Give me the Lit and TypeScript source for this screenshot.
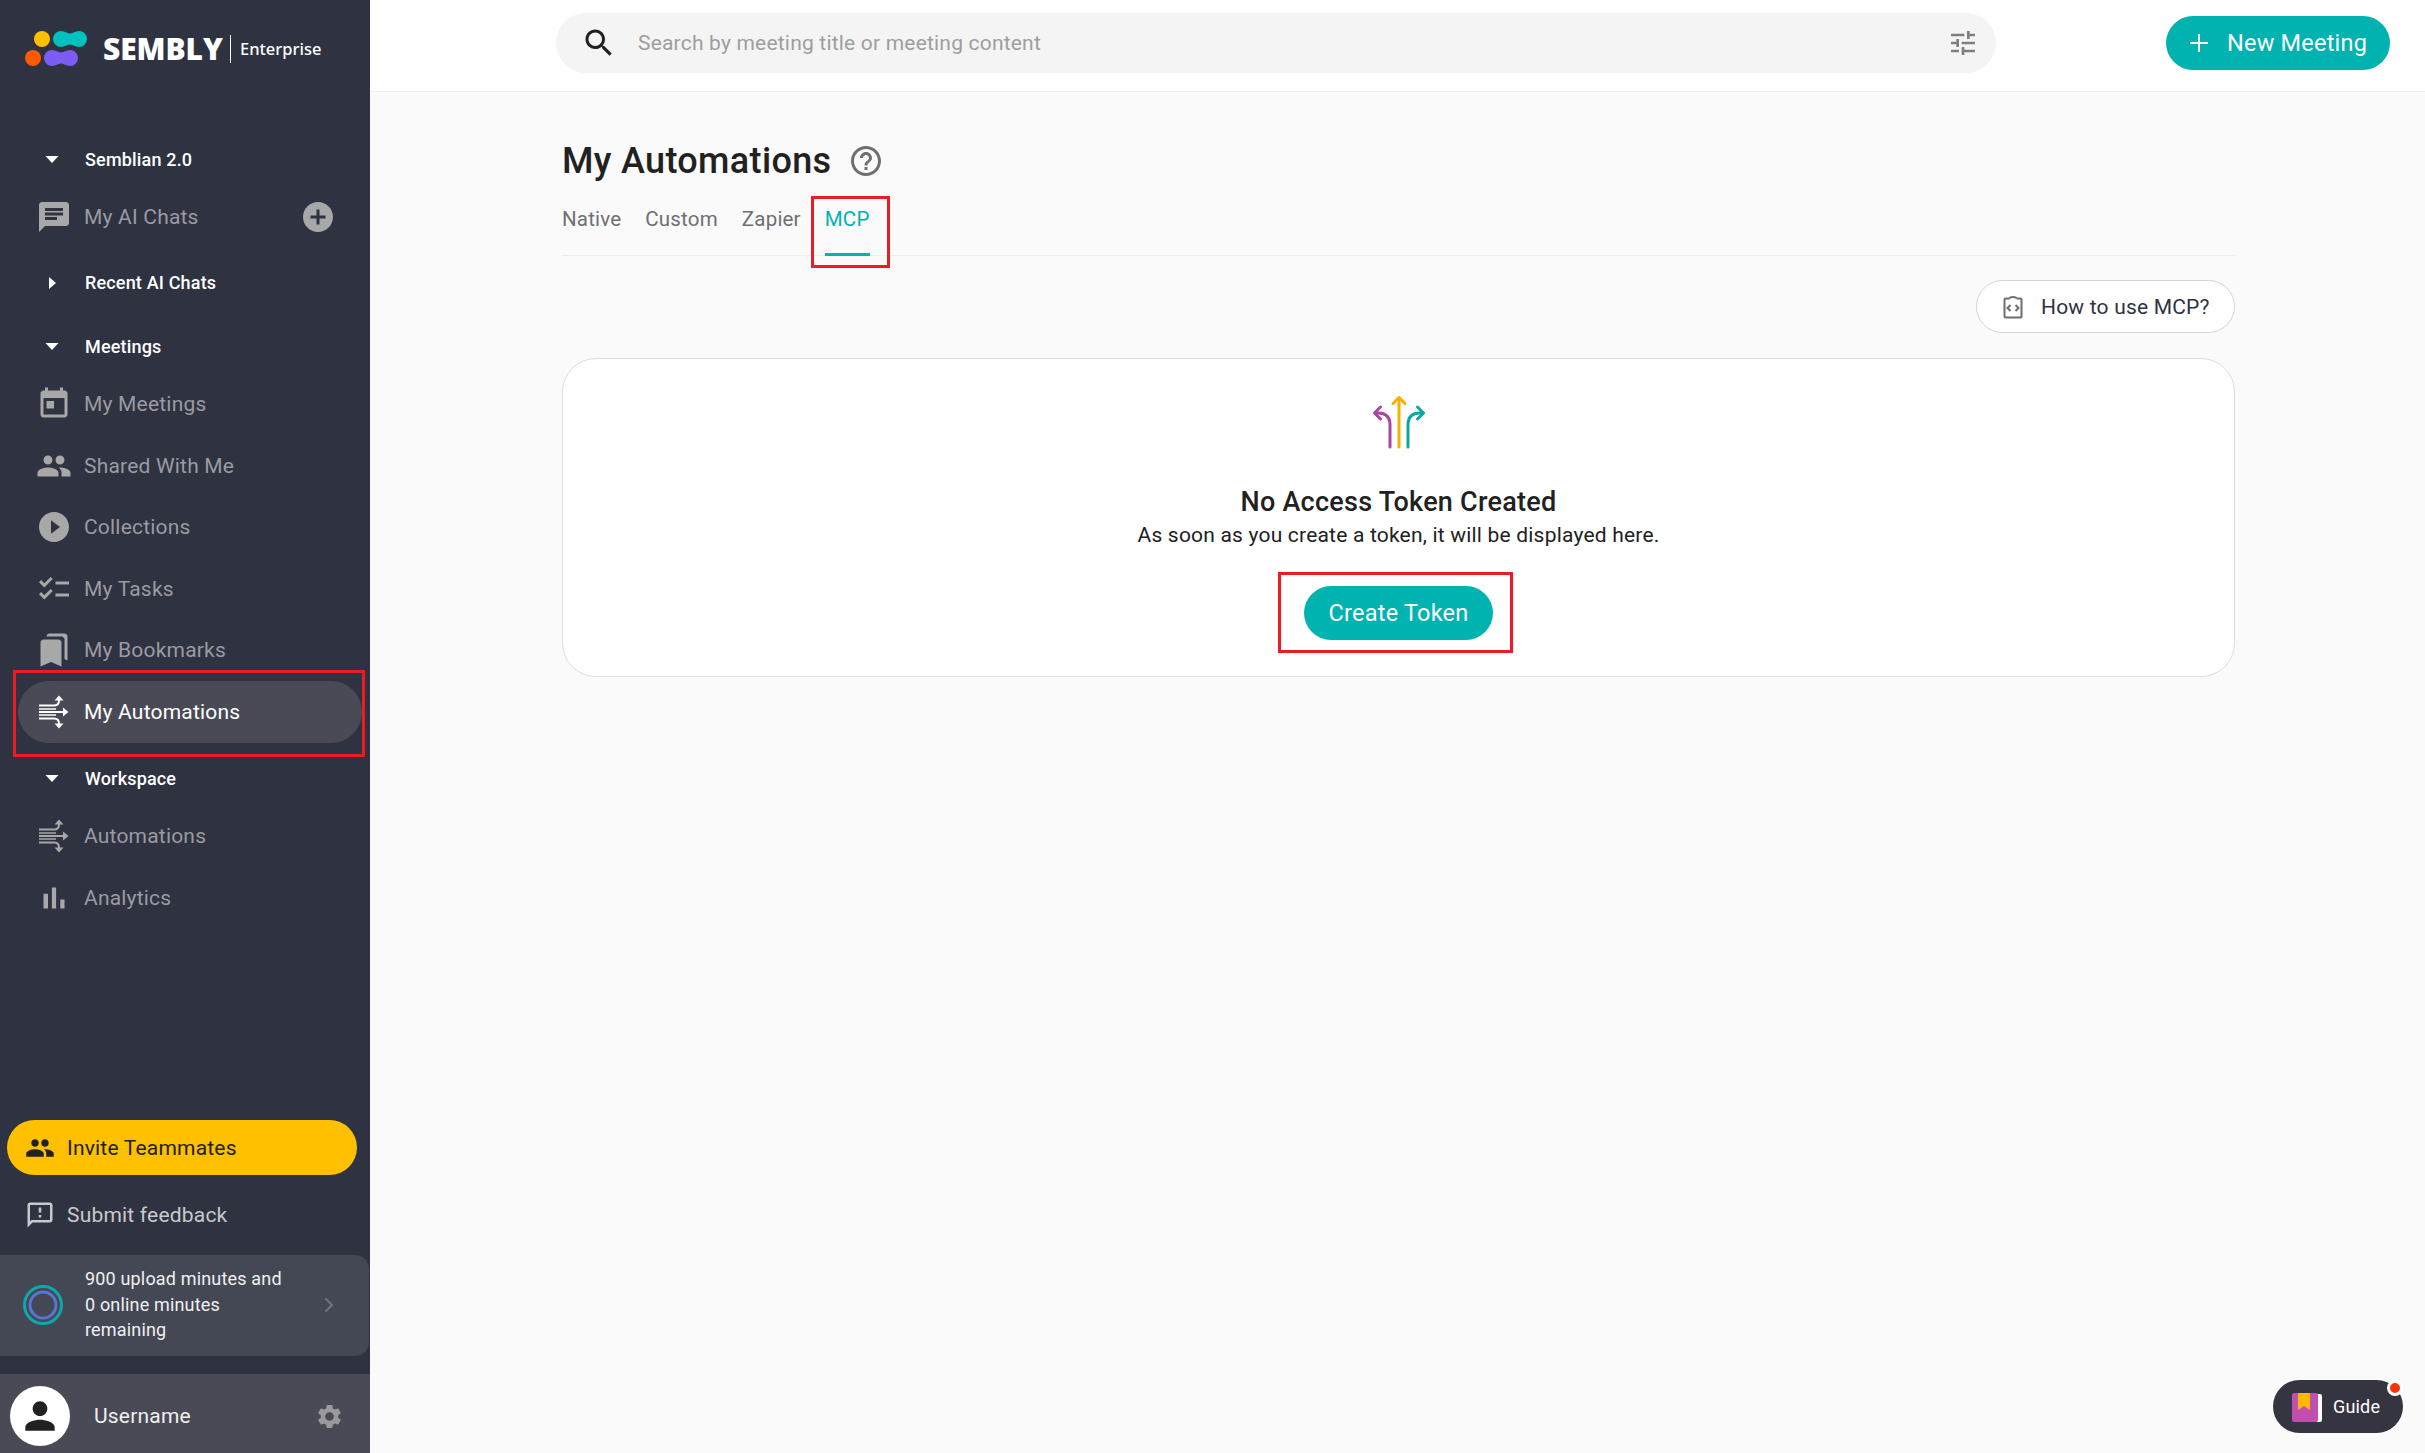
import { LitElement, html, css, svg } from "lit";
import { customElement } from "lit/decorators.js";

const P = {
  chat: "M20 2H4c-1.1 0-1.99.9-1.99 2L2 22l4-4h14c1.1 0 2-.9 2-2V4c0-1.1-.9-2-2-2zM6 9h12v2H6V9zm8 5H6v-2h8v2zm4-6H6V6h12v2z",
  add: "M12 2C6.48 2 2 6.48 2 12s4.48 10 10 10 10-4.48 10-10S17.52 2 12 2zm5 11h-4v4h-2v-4H7v-2h4V7h2v4h4v2z",
  today: "M19 3h-1V1h-2v2H8V1H6v2H5c-1.11 0-1.99.9-1.99 2L3 19c0 1.1.89 2 2 2h14c1.1 0 2-.9 2-2V5c0-1.1-.9-2-2-2zm0 16H5V8h14v11zM7 10h5v5H7z",
  people: "M16 11c1.66 0 2.99-1.34 2.99-3S17.66 5 16 5c-1.66 0-3 1.34-3 3s1.34 3 3 3zm-8 0c1.66 0 2.99-1.34 2.99-3S9.66 5 8 5C6.34 5 5 6.34 5 8s1.34 3 3 3zm0 2c-2.33 0-7 1.17-7 3.5V19h14v-2.5c0-2.33-4.67-3.5-7-3.5zm8 0c-.29 0-.62.02-.97.05 1.16.84 1.97 1.97 1.97 3.45V19h6v-2.5c0-2.33-4.67-3.5-7-3.5z",
  play: "M12 2C6.48 2 2 6.48 2 12s4.48 10 10 10 10-4.48 10-10S17.52 2 12 2zm-2 14.5v-9l6 4.5-6 4.5z",
  tasks: "M22 7h-9v2h9V7zm0 8h-9v2h9v-2zM5.54 11 2 7.46l1.41-1.41 2.12 2.12 4.24-4.24 1.41 1.41L5.54 11zm0 8L2 15.46l1.41-1.41 2.12 2.12 4.24-4.24 1.41 1.41L5.54 19z",
  bookmarks: "M19 18l2 1V3c0-1.1-.9-2-2-2H8.99C7.89 1 7 1.9 7 3h10c1.1 0 2 .9 2 2v13zM15 5H5c-1.1 0-2 .9-2 2v16l7-3 7 3V7c0-1.1-.9-2-2-2z",
  bars: "M5 9.2h3V19H5zM10.6 5h2.8v14h-2.8zm5.6 8H19v6h-2.8z",
  feedback: "M20 2H4c-1.1 0-1.99.9-1.99 2L2 22l4-4h14c1.1 0 2-.9 2-2V4c0-1.1-.9-2-2-2zm0 14H5.17L4 17.17V4h16v12zm-9-4h2v2h-2zm0-6h2v4h-2z",
  person: "M12 12c2.21 0 4-1.79 4-4s-1.79-4-4-4-4 1.79-4 4 1.79 4 4 4zm0 2c-2.67 0-8 1.34-8 4v2h16v-2c0-2.66-5.33-4-8-4z",
  gear: "M19.14 12.94c.04-.3.06-.61.06-.94 0-.32-.02-.64-.07-.94l2.03-1.58c.18-.14.23-.41.12-.61l-1.92-3.32c-.12-.22-.37-.29-.59-.22l-2.39.96c-.5-.38-1.03-.7-1.62-.94l-.36-2.54c-.04-.24-.24-.41-.48-.41h-3.84c-.24 0-.43.17-.47.41l-.36 2.54c-.59.24-1.13.57-1.62.94l-2.39-.96c-.22-.08-.47 0-.59.22L2.74 8.87c-.12.21-.08.47.12.61l2.03 1.58c-.05.3-.09.63-.09.94s.02.64.07.94l-2.03 1.58c-.18.14-.23.41-.12.61l1.92 3.32c.12.22.37.29.59.22l2.39-.96c.5.38 1.03.7 1.62.94l.36 2.54c.05.24.24.41.48.41h3.84c.24 0 .44-.17.47-.41l.36-2.54c.59-.24 1.13-.56 1.62-.94l2.39.96c.22.08.47 0 .59-.22l1.92-3.32c.12-.22.07-.47-.12-.61l-2.01-1.58zM12 15.6c-1.98 0-3.6-1.62-3.6-3.6s1.62-3.6 3.6-3.6 3.6 1.62 3.6 3.6-1.62 3.6-3.6 3.6z",
  search: "M15.5 14h-.79l-.28-.27C15.41 12.59 16 11.11 16 9.5 16 5.91 13.09 3 9.5 3S3 5.91 3 9.5 5.91 16 9.5 16c1.61 0 3.09-.59 4.23-1.57l.27.28v.79l5 4.99L20.49 19l-4.99-5zm-6 0C7.01 14 5 11.99 5 9.5S7.01 5 9.5 5 14 7.01 14 9.5 11.99 14 9.5 14z",
  tune: "M3 17v2h6v-2H3zM3 5v2h10V5H3zm10 16v-2h8v-2h-8v-2h-2v6h2zM7 9v2H3v2h4v2h2V9H7zm14 4v-2H11v2h10zm-6-4h2V7h4V5h-4V3h-2v6z",
  help: "M11 18h2v-2h-2v2zm1-16C6.48 2 2 6.48 2 12s4.48 10 10 10 10-4.48 10-10S17.52 2 12 2zm0 18c-4.41 0-8-3.59-8-8s3.59-8 8-8 8 3.59 8 8-3.59 8-8 8zm0-14c-2.21 0-4 1.79-4 4h2c0-1.1.9-2 2-2s2 .9 2 2c0 2-3 1.75-3 5h2c0-2.25 3-2.5 3-5 0-2.21-1.79-4-4-4z",
};

const icon = (d: string, size = 36) =>
  html`<svg class="ic" width=${size} height=${size} viewBox="0 0 24 24" fill="currentColor"><path d=${d}></path></svg>`;

const autoIcon = html`<svg class="ic" width="36" height="36" viewBox="0 0 36 36" fill="none" stroke="currentColor" stroke-width="2">
  <path d="M3 11.500h15c3 0 5-1.500 5-5V5"></path><path d="M18.500 6.500 23 1.500l4.500 5z" fill="currentColor" stroke="none"></path>
  <path d="M3 18h26"></path><path d="M27 13.500 32.500 18 27 22.500z" fill="currentColor" stroke="none"></path>
  <path d="M3 24.500h15c3 0 5 1.500 5 5V31"></path><path d="M18.500 29.500 23 34.500l4.500-5z" fill="currentColor" stroke="none"></path>
  <path d="M3 15h17M3 21h17" stroke-width="1.500"></path></svg>`;

const caretDown = html`<svg class="caret" width="14" height="7" viewBox="0 0 14 7"><path d="M.5 0h13L7 7z" fill="#fff"></path></svg>`;
const caretRight = html`<svg class="caret" width="14" height="14" viewBox="0 0 14 14"><path d="M4 1l7 6-7 6z" fill="#fff"></path></svg>`;

const logo = svg`<g>
  <circle cx="17" cy="14" r="8" fill="#ffc000"></circle>
  <path d="M36 6c4 0 6 2.500 9 2.500S50 6 54 6a8 8 0 0 1 0 16c-4 0-6-2.500-9-2.500S40 22 36 22a8 8 0 0 1 0-16z" fill="#00c1bd"></path>
  <circle cx="8" cy="33" r="8" fill="#ff5a00"></circle>
  <path d="M27 25c4 0 6 2.500 9 2.500S41 25 45 25a8 8 0 0 1 0 16c-4 0-6-2.500-9-2.500S31 41 27 41a8 8 0 0 1 0-16z" fill="#7b5cf5"></path></g>`;

@customElement("app-root")
export class AppRoot extends LitElement {
  static styles = css`
    :host { display: block; width: 2425px; height: 1453px; font-family: Roboto, "Liberation Sans", sans-serif; color: #212121; position: relative; overflow: hidden; background: #fafafa; }
    * { box-sizing: border-box; letter-spacing: 0.00938em; }
    .ic { flex: none; display: block; }
    .shell { display: flex; height: 100%; }
    .side { width: 370px; flex: none; background: #2f3241; display: flex; flex-direction: column; }
    .brand { height: 132px; flex: none; display: flex; align-items: flex-start; padding: 25px 0 0 25px; color: #fff; }
    .brand svg { flex: none; }
    .wm { font-family: "Open Sans", sans-serif; font-weight: 800; font-size: 30px; line-height: 47px; margin-left: 14px; letter-spacing: -0.1px; width: 118px; white-space: nowrap; }
    .bar { width: 1px; height: 28px; background: #fff; margin: 10px 9px 0 9px; flex: none; }
    .ent { font-family: "Noto Sans", sans-serif; font-weight: 500; font-size: 16.500px; line-height: 48px; letter-spacing: 0; }
    .gh { height: 54px; display: flex; align-items: center; padding-left: 45px; color: #fff; font-weight: 500; font-size: 18px; flex: none; }
    .gh .caret { margin-right: 26px; flex: none; }
    .gh.m8 { margin-top: 8px; }
    .gh.m10 { margin-top: 10px; }
    .gh.m9 { margin-top: 9px; }
    .item { height: 61.500px; display: flex; align-items: center; margin: 0 8px 0 18px; padding-left: 18px; color: #9a9ba1; font-size: 21px; flex: none; position: relative; border-radius: 31px; gap: 12px; }
    .item .ic { color: #a8a8a8; }
    .item .add { margin-left: auto; margin-right: 26px; }
    .item.active { background: #494a55; color: #fff; }
    .item.active .ic { color: #fff; }
    .mark { position: absolute; border: 3px solid #ed1c24; pointer-events: none; }
    .mark.nav { left: -5px; right: -3px; top: -11px; bottom: -14px; }
    .spacer { flex: 1; }
    .invite { height: 55px; margin: 0 13px 10px 7px; border-radius: 28px; background: #ffc000; display: flex; align-items: center; padding-left: 18px; gap: 12px; font-size: 21px; color: #212121; flex: none; }
    .fb { height: 60px; margin-bottom: 10px; display: flex; align-items: center; padding-left: 25px; gap: 12px; color: #c9c9cc; font-size: 21px; flex: none; }
    .mins { height: 101px; margin-right: 1px; border-radius: 0 14px 14px 0; background: #444855; display: flex; align-items: center; padding: 0 0 2px 20px; color: #f0f0f0; font-size: 18px; line-height: 25.500px; flex: none; }
    .mins .ring { flex: none; margin-right: 19px; }
    .mins .txt { flex: 1; }
    .mins .chev { flex: none; margin-right: 35px; }
    .foot { margin-top: 18px; height: 79px; background: #494a55; display: flex; align-items: center; padding: 5px 0 0 10px; color: #f0f0f0; font-size: 21px; flex: none; }
    .avatar { width: 60px; height: 60px; border-radius: 50%; background: #fff; display: flex; align-items: center; justify-content: center; color: #212121; flex: none; margin-right: 24px; }
    .foot .gear { margin-left: auto; margin-right: 26px; color: #99999e; }
    .main { flex: 1; min-width: 0; display: flex; flex-direction: column; }
    .top { height: 92px; flex: none; background: #fff; border-bottom: 1px solid #eeeeee; display: flex; align-items: flex-start; }
    .search { width: 1440px; height: 60px; margin: 13px 0 0 186px; border-radius: 30px; background: #f4f4f4; display: flex; align-items: center; padding-left: 25px; color: #9e9e9e; font-size: 21px; }
    .search .si { color: #212121; margin-right: 21px; }
    .search .tune { margin-left: auto; margin-right: 17px; color: #7f7f7f; }
    .new { margin: 16px 35px 0 auto; height: 54px; width: 224px; border-radius: 27px; background: #00b3b0; color: #fff; display: flex; align-items: center; padding-left: 23px; font-size: 23.500px; gap: 18px; }
    .content { flex: 1; padding: 45px 190px 0 192px; position: relative; }
    .title { display: flex; align-items: center; height: 48px; font-size: 36px; font-weight: 500; color: #212121; }
    .title .ic { margin-left: 17px; color: #6f6f6f; }
    .tabs { display: flex; gap: 24px; height: 71px; border-bottom: 1px solid #eeeeee; font-size: 20.500px; color: #6f6f73; }
    .tab { position: relative; padding-top: 21px; line-height: 26px; height: 71px; }
    .tab.on { color: #00b3b0; border-bottom: 3px solid #00b3b0; }
    .mark.tabm { left: -14px; right: -20px; top: 11px; bottom: -15px; }
    .howrow { display: flex; justify-content: flex-end; margin-top: 24px; }
    .how { height: 53px; width: 259px; border-radius: 27px; background: #fff; border: 1px solid #d4d4d4; display: flex; align-items: center; padding-left: 24px; gap: 16px; font-size: 21px; color: #2f3241; }
    .card { margin-top: 25px; height: 319px; background: #fff; border: 1px solid #dddddd; border-radius: 34px; display: flex; flex-direction: column; align-items: center; padding-top: 36px; }
    .card h2 { margin: 36px 0 0; font-size: 27px; font-weight: 500; line-height: 34px; color: #212121; }
    .card p { margin: 0; font-size: 21px; line-height: 32px; color: #212121; }
    .btn { position: relative; margin-top: 35px; height: 54px; width: 189px; border-radius: 27px; background: #00b3b0; color: #fff; display: flex; align-items: center; justify-content: center; font-size: 23.500px; }
    .mark.btnm { left: -26px; right: -20px; top: -14px; bottom: -13px; }
    .guide { position: absolute; left: 2273px; top: 1380px; width: 130px; height: 53px; border-radius: 27px; background: #343541; color: #fff; display: flex; align-items: center; padding-left: 19px; gap: 11px; font-size: 18px; }
    .dot { position: absolute; right: 0; top: 0; width: 16px; height: 16px; border-radius: 50%; background: #ff3300; border: 3px solid #fff; }
  `;

  private nav(label: string, i: unknown, cls = "") {
    return html`<div class="item ${cls}">${i}<span>${label}</span></div>`;
  }

  render() {
    return html`<div class="shell">
      <aside class="side">
        <div class="brand">
          <svg width="64" height="42" viewBox="0 0 64 42">${logo}</svg>
          <span class="wm">SEMBLY</span><span class="bar"></span><span class="ent">Enterprise</span>
        </div>
        <div class="gh">${caretDown}<span>Semblian 2.0</span></div>
        <div class="item">${icon(P.chat)}<span>My AI Chats</span><span class="add">${icon(P.add)}</span></div>
        <div class="gh m8">${caretRight}<span>Recent AI Chats</span></div>
        <div class="gh m10">${caretDown}<span>Meetings</span></div>
        ${this.nav("My Meetings", icon(P.today))}
        ${this.nav("Shared With Me", icon(P.people))}
        ${this.nav("Collections", icon(P.play))}
        ${this.nav("My Tasks", icon(P.tasks))}
        ${this.nav("My Bookmarks", icon(P.bookmarks))}
        <div class="item active">${autoIcon}<span>My Automations</span><div class="mark nav"></div></div>
        <div class="gh m9">${caretDown}<span>Workspace</span></div>
        ${this.nav("Automations", autoIcon)}
        ${this.nav("Analytics", icon(P.bars))}
        <div class="spacer"></div>
        <div class="invite">${icon(P.people, 30)}<span>Invite Teammates</span></div>
        <div class="fb">${icon(P.feedback, 30)}<span>Submit feedback</span></div>
        <div class="mins">
          <svg class="ring" width="46" height="46" viewBox="0 0 46 46" fill="none"><circle cx="23" cy="23" r="18.500" stroke="#0fa8a8" stroke-width="3"></circle><circle cx="23" cy="23" r="13" stroke="#5b73d6" stroke-width="3"></circle></svg>
          <div class="txt">900 upload minutes and<br />0 online minutes<br />remaining</div>
          <svg class="chev" width="10" height="16" viewBox="0 0 10 16" fill="none"><path d="M1.500 1.500 8 8l-6.500 6.500" stroke="#71747f" stroke-width="2"></path></svg>
        </div>
        <div class="foot"><div class="avatar">${icon(P.person, 44)}</div><span>Username</span><span class="gear">${icon(P.gear, 29)}</span></div>
      </aside>
      <div class="main">
        <header class="top">
          <div class="search"><span class="si">${icon(P.search)}</span><span>Search by meeting title or meeting content</span><span class="tune">${icon(P.tune, 32)}</span></div>
          <div class="new"><svg width="20" height="20" viewBox="0 0 20 20" fill="none"><path d="M10 1v18M1 10h18" stroke="#fff" stroke-width="2"></path></svg><span>New Meeting</span></div>
        </header>
        <section class="content">
          <div class="title"><span>My Automations</span>${icon(P.help, 36)}</div>
          <div class="tabs">
            <span class="tab">Native</span><span class="tab">Custom</span><span class="tab">Zapier</span>
            <span class="tab on">MCP<div class="mark tabm"></div></span>
          </div>
          <div class="howrow"><div class="how">
            <svg width="24" height="24" viewBox="0 0 24 24" fill="none" stroke="#6f6f6f" stroke-width="2"><path d="M8.500 3.500H4.500a1 1 0 0 0-1 1v17a1 1 0 0 0 1 1h15a1 1 0 0 0 1-1v-17a1 1 0 0 0-1-1h-4M8.500 3.500c.5-2 6.500-2 7 0"></path><path d="M9.500 10 6.500 13l3 3M14.500 10l3 3-3 3"></path></svg>
            <span>How to use MCP?</span>
          </div></div>
          <div class="card">
            <svg width="54" height="54" viewBox="0 0 54 54" fill="none" stroke-width="3" stroke-linecap="round" stroke-linejoin="round">
              <g stroke="#a8479e"><path d="M18 52V30q0-12-12-12H3"></path><path d="M8.500 12 2.500 18l6 6"></path></g>
              <g stroke="#f5b000"><path d="M27 52V3"></path><path d="M21 8.500 27 2.500l6 6"></path></g>
              <g stroke="#0aa89e"><path d="M36 52V30q0-12 12-12h3"></path><path d="M45.500 12l6 6-6 6"></path></g>
            </svg>
            <h2>No Access Token Created</h2>
            <p>As soon as you create a token, it will be displayed here.</p>
            <div class="btn">Create Token<div class="mark btnm"></div></div>
          </div>
        </section>
      </div>
    </div>
    <div class="guide">
      <svg width="30" height="30" viewBox="0 0 30 30"><rect x="5" y="2" width="25" height="28" rx="2" fill="#fff"></rect><rect x="0" y="1" width="26" height="29" rx="2" fill="#c04fb0"></rect><path d="M6 1h12v17l-6-4-6 4z" fill="#ffb800"></path></svg>
      <span>Guide</span><div class="dot"></div>
    </div>`;
  }
}
